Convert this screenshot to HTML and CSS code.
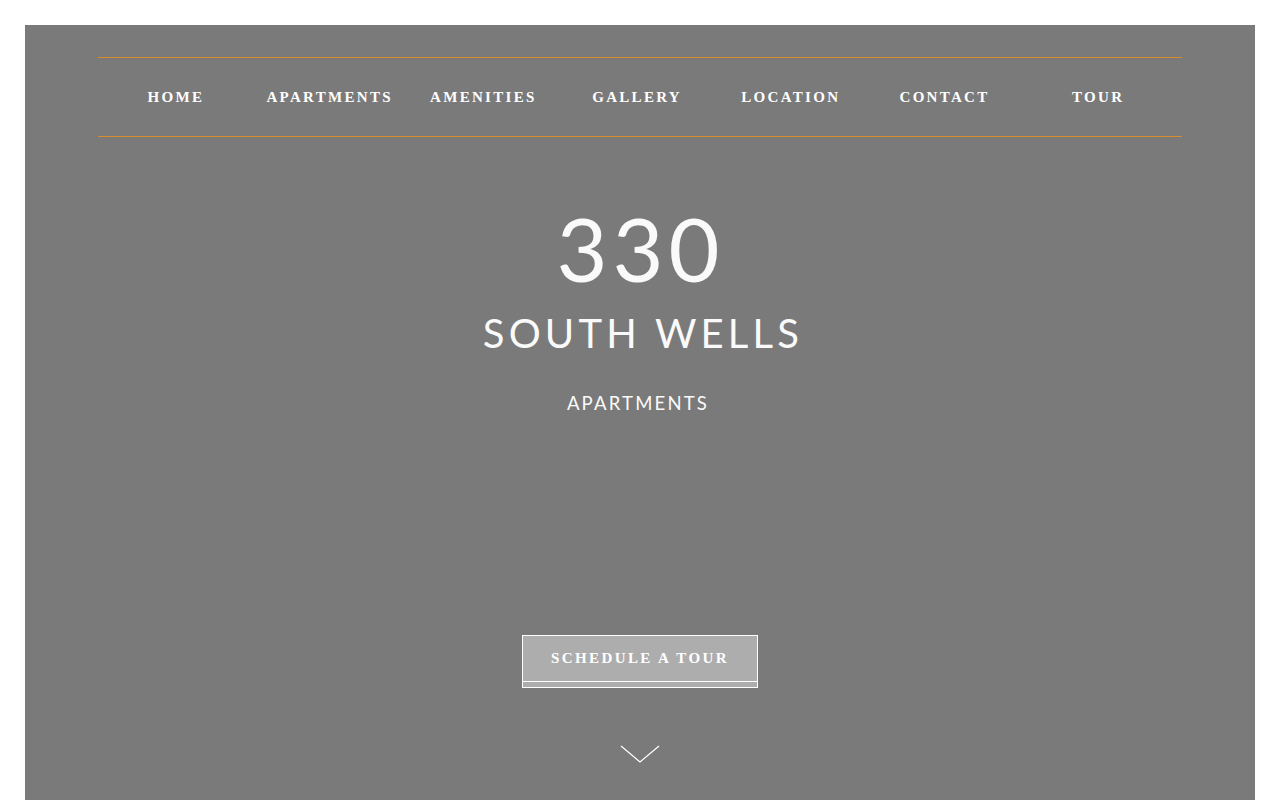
FILE: index.html
```html
<!DOCTYPE html>
<html lang="en">

<head>
    <meta charset="UTF-8">
    <meta name="viewport" content="width=device-width, initial-scale=1.0">
    <title>330 South Wells Apartments</title>
    <link rel="stylesheet" href="styles.css">
</head>

<body>
    <div class="hero">
        <nav class="menu">
            <a href="#">Home</a>
            <a href="#">Apartments</a>
            <a href="#">Amenities</a>
            <a href="#">Gallery</a>
            <a href="#">Location</a>
            <a href="#">Contact</a>
            <a href="#">Tour</a>
        </nav>

        <div class="title">
            <div class="num">330</div>
            <div class="name">South Wells</div>
            <div class="sub">Apartments</div>
        </div>

        <a href="#" class="btn"><span>Schedule a Tour</span></a>

        <div class="down">
            <svg width="40" height="18" viewBox="0 0 40 18">
                <polyline points="1,1 20,17 39,1" fill="none" stroke="#fff" stroke-width="1.2" />
            </svg>
        </div>
    </div>
</body>

</html>
```

FILE: styles.css
```css
body {
    margin: 0;
    padding: 25px 25px 0;
    background: #fff;
    overflow: hidden;
}

.hero {
    background: #7a7a7a;
    height: 800px;
    padding: 32px 73px 0;
    display: flex;
    flex-direction: column;
    align-items: center;
}

.menu {
    align-self: stretch;
    display: grid;
    grid-template-columns: repeat(7, 1fr);
    height: 78px;
    padding-right: 8px;
    border-top: 1px solid #d98c2a;
    border-bottom: 1px solid #d98c2a;
}

.menu a {
    display: flex;
    align-items: center;
    justify-content: center;
    padding-left: 2.2px;
    color: #fff;
    text-decoration: none;
    text-transform: uppercase;
    font-family: "Liberation Serif", serif;
    font-weight: bold;
    font-size: 15px;
    letter-spacing: 2.3px;
}

.title {
    margin-top: 67px;
    display: flex;
    flex-direction: column;
    align-items: center;
    color: #fafafa;
    font-family: Lato, sans-serif;
    line-height: 1;
}

.num {
    font-size: 88px;
    letter-spacing: 5px;
    padding-left: 1px;
}

.name {
    margin-top: 21px;
    font-size: 40px;
    letter-spacing: 4.2px;
    padding-left: 6px;
    text-transform: uppercase;
}

.sub {
    margin-top: 41px;
    font-size: 18.5px;
    letter-spacing: 2.2px;
    padding-right: 4px;
    text-transform: uppercase;
}

.btn {
    margin-top: 222px;
    width: 234px;
    border: 1px solid #fff;
    padding-bottom: 5px;
    background: #adadad;
    text-decoration: none;
}

.btn span {
    display: flex;
    align-items: center;
    justify-content: center;
    height: 45px;
    border-bottom: 1px solid #fff;
    color: #fff;
    text-transform: uppercase;
    font-family: "Liberation Serif", serif;
    font-weight: bold;
    font-size: 15px;
    letter-spacing: 2.4px;
}

.down {
    margin-top: 57px;
    line-height: 0;
}
```
